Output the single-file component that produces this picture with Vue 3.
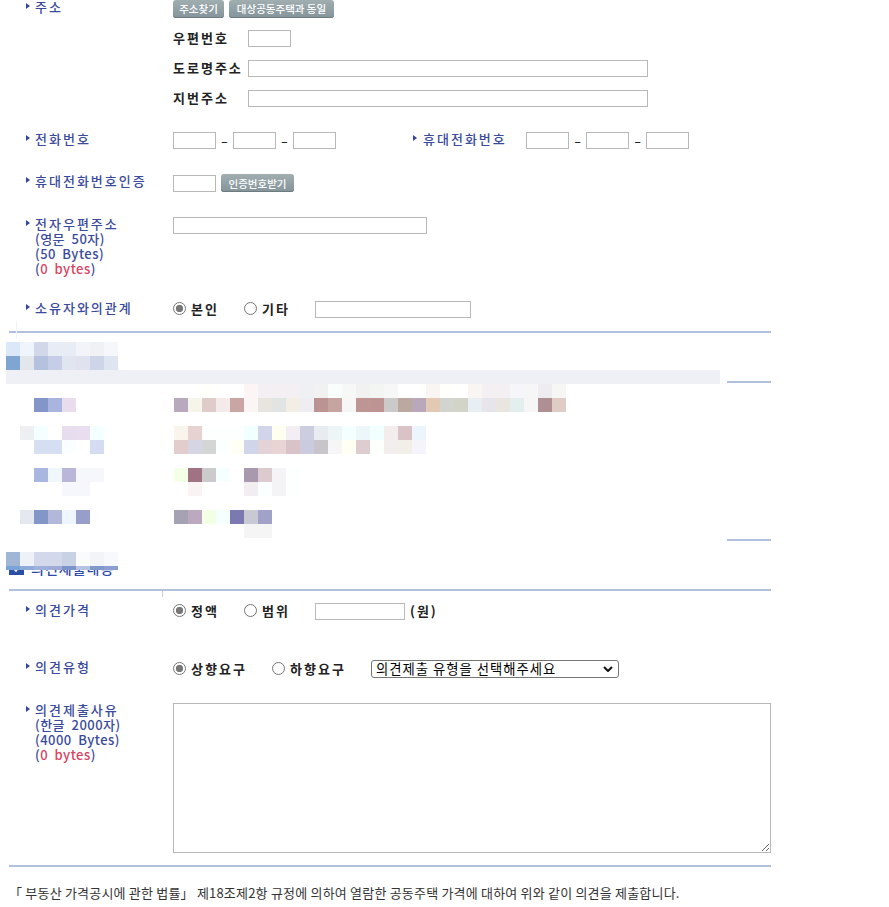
<script setup>
const blank = (n) => Array(n).fill(null)
const rows = [
  ['#dbe8f9','#f0f4fc','#d2d8e9','#e8ecf5','#e8ecf5','#f3f4f9','#f0f1f5','#f6f7fb'],
  ['#7fa5d3','#e3e6ea','#b5c2de','#c5cde7','#e1e5ef','#e0e3ef','#cfd5e8','#dee4f0'],
  Array(51).fill('#eff0f5'),
  [...blank(14),'#fffffb',null,null,'#fbf6f5','#f3eff2','#f3eff2','#f3eff2','#eff0f3','#f0f1f0','#f9fefd','#f6f7f6','#f0f1f0','#f3f5f2','#f6f7f6',null,null,'#f9f5f3','#fffffb',null,'#f9f5f3','#f3eff2','#f3eff2','#f6f5f9','#f6f6f6','#eeecf1','#f6f6f5'],
  [null,null,'#8496c8','#a9b5de','#e9dcec',...blank(7),'#b9a9bf','#f5f5e9','#dfcbc9','#f3ebe9','#c9a6a3','#fbf6f5','#e8e5e0','#e0e4e3','#f2eee6','#eeeef2','#bb9392','#c6a5a1','#f6f6f6','#bd9595','#bd9492','#cacaca','#bba89e','#b9a8ba','#e1c9b3','#d2d4d0','#d2d4c8','#e7eff2','#e8e4ec','#e9e6e0','#e2efec','#f6f6f6','#ae9094','#dfcdc5'],
  [],
  [null,'#eeeff3','#f4ffff',null,'#e6deee','#e8def0','#f4ffff',...blank(5),'#f9f5ec','#e6d3d1','#fdffff','#fdffff','#fdffff','#f2ffff','#d2d5e9','#fffff0','#f3eef3','#cdcde0','#e8ecf0','#edf5f6','#f4ffff','#edf6f9','#f2ffff','#f3edee','#dac3c7','#ebf5fb'],
  [null,null,'#d6def2','#d6def2','#fbfeff',null,'#d5dcf2',...blank(5),'#e0cdcc','#d5d5e4','#d4d6d6','#fcffff','#fffff5','#d1d5e9','#e4d3d6','#e8d4d4','#d8c3c9','#cbcbdf','#c7c4ca','#f6f6f6','#fffff3','#decdd0','#fcfffc','#f3eeee','#f2efe8','#f5f4fa'],
  [],
  [null,null,'#a9b6e0','#eff7fb','#b9b6d9','#f6f7fc','#f6f7fc',...blank(5),'#f4ffe8','#a07384','#cbcbcb','#f5ffff',null,'#a899ae','#dccacf','#f4f4f6','#fcfffd'],
  [...blank(4),'#f6f7fc','#f6f7fc',...blank(7),'#f9f4f3',...blank(3),'#f2edf1','#fbffff','#f4f4f6','#fcfffd'],
  [],
  [null,'#e6e8f0','#8296c8','#b3b7da','#eef5fd','#979ec9',...blank(6),'#a5a2b4','#bca9bf','#f3ffe5','#f5ffff','#7c78b0','#c9c9d4','#a2a1c8'],
  [...blank(17),'#f5f5f5','#f5f5f5'],
  [],
  ['#a0b6d4','#eef2f8','#d3d9ea','#d3d9ea','#c9d2e4','#fafbfd','#f3f4f8','#f8f9fc'],
  ['#7aa3d8','#8daad8','#9fb0dc','#9fabd6','#7b94c9','#b5c2e2','#7f98cc','#8ba0d0']
]
</script>

<template>
  <form class="page">
    <div class="row">
      <div class="label"><span class="arrow"></span>주소</div>
      <div class="stack">
        <div class="inline btns">
          <button type="button" class="btn w51">주소찾기</button>
          <button type="button" class="btn w105">대상공동주택과 동일</button>
        </div>
        <div class="inline"><span class="sub">우편번호</span><input class="w43" type="text" /></div>
        <div class="inline"><span class="sub">도로명주소</span><input class="w400" type="text" /></div>
        <div class="inline"><span class="sub">지번주소</span><input class="w400" type="text" /></div>
      </div>
    </div>

    <div class="row mt25">
      <div class="label"><span class="arrow"></span>전화번호</div>
      <div class="inline">
        <input class="w43" type="text" /><span class="dash">-</span><input class="w43" type="text" /><span class="dash">-</span><input class="w43" type="text" />
      </div>
      <div class="label mobile"><span class="arrow"></span>휴대전화번호</div>
      <div class="inline">
        <input class="w43" type="text" /><span class="dash">-</span><input class="w43" type="text" /><span class="dash">-</span><input class="w43" type="text" />
      </div>
    </div>

    <div class="row mt25">
      <div class="label"><span class="arrow"></span>휴대전화번호인증</div>
      <div class="inline auth">
        <input class="w43" type="text" />
        <button type="button" class="btn w73">인증번호받기</button>
      </div>
    </div>

    <div class="row mt25">
      <div class="label tall">
        <span class="arrow"></span><span class="lead">전자우편주소</span><br />(영문 50자)<br />(50 Bytes)<br />(<em>0 bytes</em>)
      </div>
      <input class="w254" type="text" />
    </div>

    <div class="row mt24">
      <div class="label"><span class="arrow"></span>소유자와의관계</div>
      <div class="inline">
        <label class="radio w71"><input type="radio" name="rel" checked />본인</label>
        <label class="radio w71"><input type="radio" name="rel" />기타</label>
        <input class="w156" type="text" />
      </div>
    </div>

    <div class="rule mt13"><i class="tick first"></i></div>

    <section class="blurred">
      <div class="mosaic">
        <div v-for="(cells, r) in rows" :key="r" class="mrow">
          <span v-for="(c, i) in cells" :key="i" class="cell" :style="{ background: c || 'transparent' }"></span>
        </div>
      </div>
      <div class="stubs">
        <div class="stub"></div>
        <div class="stub second"></div>
      </div>
    </section>

    <h3 class="heading">
      <svg class="check" viewBox="0 0 15 14" width="15" height="14" aria-hidden="true">
        <rect width="15" height="14" fill="#2a4fa3" />
        <path d="M4 7l3 3 4-6" fill="none" stroke="#fff" stroke-width="1.6" />
      </svg>
      의견제출내용
    </h3>

    <div class="rule"><i class="tick"></i></div>

    <div class="row mt12">
      <div class="label"><span class="arrow"></span>의견가격</div>
      <div class="inline">
        <label class="radio w71"><input type="radio" name="price" checked />정액</label>
        <label class="radio w71"><input type="radio" name="price" />범위</label>
        <input class="w90" type="text" />
        <span class="won">(원)</span>
      </div>
    </div>

    <div class="row mt40">
      <div class="label"><span class="arrow"></span>의견유형</div>
      <div class="inline">
        <label class="radio w99"><input type="radio" name="kind" checked />상향요구</label>
        <label class="radio w99"><input type="radio" name="kind" />하향요구</label>
        <select class="kind">
          <option>의견제출 유형을 선택해주세요</option>
        </select>
      </div>
    </div>

    <div class="row mt25">
      <div class="label tall">
        <span class="arrow"></span><span class="lead">의견제출사유</span><br />(한글 2000자)<br />(4000 Bytes)<br />(<em>0 bytes</em>)
      </div>
      <textarea class="reason"></textarea>
    </div>

    <div class="rule mt12"></div>

    <p class="notice">「 부동산 가격공시에 관한 법률」 제18조제2항 규정에 의하여 열람한 공동주택 가격에 대하여 위와 같이 의견을 제출합니다.</p>
  </form>
</template>

<style scoped>
.page {
  position: relative;
  width: 762px;
  height: 907px;
  margin-left: 9px;
  font-family: "Noto Sans CJK KR", "Liberation Sans", sans-serif;
  font-size: 13px;
  line-height: 15px;
  color: #222;
}
.row { display: flex; align-items: flex-start; }
.mt12 { margin-top: 12px; }
.mt13 { margin-top: 13px; }
.mt24 { margin-top: 24px; }
.mt25 { margin-top: 25px; }
.mt40 { margin-top: 40px; }
.label {
  position: relative;
  top: -1px;
  flex: none;
  box-sizing: border-box;
  width: 164px;
  padding-left: 26px;
  font-weight: 500;
  letter-spacing: 2px;
  color: #3a4a9c;
}
.label em { font-style: normal; color: #d9435f; letter-spacing: 0.5px; }
.label.tall { letter-spacing: 0.5px; word-spacing: 3px; }
.lead { letter-spacing: 2px; }
.label.mobile { width: 114px; margin-left: 76px; padding-left: 11px; }
.label.mobile .arrow { margin-left: -10px; }
.arrow {
  position: absolute;
  margin-left: -9px;
  margin-top: 4px;
  width: 0;
  height: 0;
  border-left: 4px solid #33479c;
  border-top: 3.5px solid transparent;
  border-bottom: 3.5px solid transparent;
}
.stack { display: flex; flex-direction: column; gap: 13px; }
.btns { gap: 5px; height: 17px; align-items: flex-start; }
.inline { display: flex; align-items: center; }
.auth { gap: 5px; }
.sub { position: relative; top: -1px; width: 75px; flex: none; font-weight: 700; letter-spacing: 2px; }
input[type="text"] {
  flex: none;
  box-sizing: border-box;
  height: 17px;
  margin: 0;
  padding: 0 2px;
  border: 1px solid #b8b8b8;
  background: #fff;
  outline: none;
}
.auth input[type="text"] { margin-top: 1px; }
.w43 { width: 43px; }
.w90 { width: 90px; }
.w156 { width: 156px; }
.w254 { width: 254px; }
.w400 { width: 400px; }
.dash { width: 17px; text-align: center; color: #222; transform: scaleX(1.6); }
.btn {
  box-sizing: border-box;
  height: 18px;
  margin: 0;
  padding: 0;
  border: 0;
  border-radius: 3px;
  background: linear-gradient(#a0aeb0, #84949a);
  box-shadow: inset 0 -1px 0 #6c7c80;
  color: #fff;
  font-family: inherit;
  font-size: 10.5px;
  font-weight: 500;
  line-height: 17px;
  text-align: center;
}
.w51 { width: 51px; }
.w73 { width: 73px; }
.w105 { width: 105px; }
.radio {
  position: relative;
  top: -1px;
  display: flex;
  align-items: center;
  flex: none;
  font-weight: 700;
  letter-spacing: 2px;
  color: #222;
}
.w71 { width: 71px; }
.w99 { width: 99px; }
.radio input {
  appearance: none;
  box-sizing: border-box;
  width: 13px;
  height: 13px;
  margin: 0 5px 0 0;
  border: 1px solid #767676;
  border-radius: 50%;
  background: #fff;
}
.radio input:checked {
  background: radial-gradient(circle, #777 0 3.4px, #fff 4px);
}
.won { position: relative; top: -1px; margin-left: 5px; font-weight: 700; letter-spacing: 2px; }
.kind {
  appearance: none;
  box-sizing: border-box;
  width: 248px;
  height: 18px;
  margin: 0;
  padding: 0 20px 0 4px;
  border: 1px solid #767676;
  border-radius: 3px;
  background: #fff url("data:image/svg+xml,%3Csvg xmlns='http://www.w3.org/2000/svg' width='10' height='6'%3E%3Cpath d='M1 1l4 4 4-4' fill='none' stroke='%23111' stroke-width='2'/%3E%3C/svg%3E") no-repeat right 5px center;
  color: #000;
  font-family: inherit;
  font-size: 13.33px;
  letter-spacing: 1px;
  line-height: 16px;
}
.reason {
  flex: none;
  display: block;
  box-sizing: border-box;
  width: 598px;
  height: 150px;
  margin: 0;
  border: 1px solid #b8b8b8;
  outline: none;
}
.rule { position: relative; height: 2px; background: #b3bfde; }
.tick { position: absolute; left: 153px; top: 2px; width: 1px; height: 6px; background: #c8d0e6; }
.tick.first { left: 7px; top: -10px; height: 18px; background: #f1f3fa; }
.blurred {
  position: relative;
  z-index: 1;
  display: flex;
  height: 228px;
  margin: 9px 0 0 -3px;
}
.mosaic { width: 714px; flex: none; overflow: hidden; }
.mrow { display: flex; height: 14px; }
.mrow:last-child { height: 4px; }
.cell { flex: none; width: 14px; height: 14px; }
.stubs { margin: 39px 0 0 7px; width: 44px; }
.stub { height: 2px; background: #b3bfde; }
.stub.second { margin-top: 156px; }
.heading {
  display: flex;
  align-items: center;
  gap: 7px;
  height: 29px;
  margin: -10px 0 0;
  padding: 0 0 13px;
  box-sizing: border-box;
  font-size: 14px;
  font-weight: 500;
  letter-spacing: 1px;
  color: #2d4aa8;
}
.check { flex: none; }
.notice {
  margin: 18px 0 0;
  font-size: 13px;
  line-height: 15px;
  letter-spacing: 0.2px;
  color: #333;
  white-space: nowrap;
}
</style>
